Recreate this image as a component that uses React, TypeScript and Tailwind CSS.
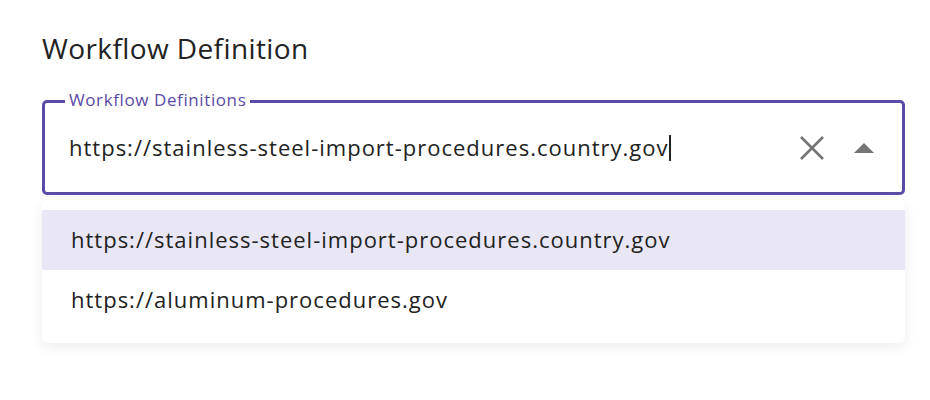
const options = [
  'https://stainless-steel-import-procedures.country.gov',
  'https://aluminum-procedures.gov',
];

export default function App() {
  const value = options[0];

  return (
    <div className="min-h-[400px] bg-white pl-[42px] pr-[25px] pt-[30px] font-['Open_Sans',sans-serif] text-[#222]">
      <h2 className="text-[28px] leading-[36px] font-medium tracking-[0.4px]">Workflow Definition</h2>

      <div className="relative mt-[34px] flex h-[95px] items-center rounded-[5px] border-[3px] border-[#5b4ba8] pl-[24px] pr-[28px]">
        <span className="absolute -top-[14px] left-[20px] bg-white px-[4px] text-[17px] leading-[22px] tracking-[0.6px] text-[#5b4ba8]">
          Workflow Definitions
        </span>
        <div className="flex flex-1 items-center text-[22px] tracking-[1px]">
          <span>{value}</span>
          <span className="ml-[1px] inline-block h-[26px] w-[2px] bg-[#222]" />
        </div>
        <div className="flex items-center gap-[29px]">
          <svg width="26" height="26" viewBox="0 0 26 26">
            <path d="M2 2 L24 24 M24 2 L2 24" stroke="#757575" strokeWidth="2.6" />
          </svg>
          <svg width="20" height="10" viewBox="0 0 20 10">
            <path d="M0 10 L10 0 L20 10 Z" fill="#757575" />
          </svg>
        </div>
      </div>

      <ul className="mt-[5px] rounded-[6px] bg-white pt-[10px] pb-[14px] shadow-[0_4px_14px_rgba(0,0,0,0.07)]">
        {options.map(o => (
          <li
            key={o}
            className={`flex h-[59.5px] items-center pl-[29px] text-[22px] tracking-[1px] ${o === value ? 'bg-[#e9e7f5]' : ''}`}>
            {o}
          </li>
        ))}
      </ul>
    </div>
  );
}
